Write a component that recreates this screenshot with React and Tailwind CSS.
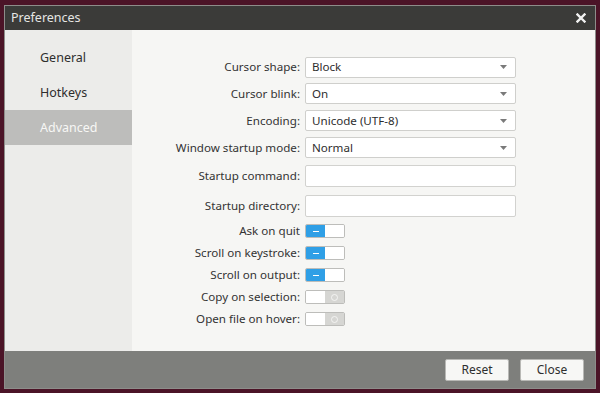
import React from "react";

const font = { fontFamily: '"Noto Sans", "DejaVu Sans", sans-serif' };

function Select({ value }) {
  return (
    <div className="h-[21px] w-[211px] bg-white border border-[#cfcfcc] rounded-[2px] flex items-center justify-between pl-[6px] pr-[8px] text-[11.6px] text-[#2e2e2e]">
      <span>{value}</span>
      <svg width="7" height="4" viewBox="0 0 7 4"><path d="M0 0 L7 0 L3.5 4 Z" fill="#7a7a7a" /></svg>
    </div>
  );
}

function Input() {
  return <div className="h-[22px] w-[211px] bg-white border border-[#d2d2cf] rounded-[2px]" />;
}

function Toggle({ on }) {
  return (
    <div className="h-[14px] w-[40px] flex border border-[#bdbdba] rounded-[2px] overflow-hidden">
      {on ? (
        <>
          <div className="w-[19px] h-full bg-[#2f9fe6] flex items-center justify-center">
            <div className="w-[6px] h-[1px] bg-white" />
          </div>
          <div className="flex-1 bg-white" />
        </>
      ) : (
        <>
          <div className="flex-1 bg-white" />
          <div className="w-[19px] h-full bg-[#d6d6d3] flex items-center justify-center">
            <div className="w-[7px] h-[7px] rounded-full border border-[#f4f4f2]" />
          </div>
        </>
      )}
    </div>
  );
}

function Row({ label, h, children }) {
  return (
    <div className={`flex items-center ${h}`}>
      <div className="w-[163px] text-right text-[11.6px] text-[#333] whitespace-nowrap">{label}</div>
      <div className="ml-[5px]">{children}</div>
    </div>
  );
}

export default function App() {
  return (
    <div className="w-[600px] h-[393px] bg-[#4b1427] pt-[5px] pl-[4px]" style={font}>
      <div className="w-[592px] h-[384px] border border-[#8d8d8a] flex flex-col bg-[#3b3b39]">
        <div className="h-[24px] flex items-center justify-between pl-[6px] pr-[9px] text-[#e6e6e4] text-[12.5px]">
          <span>Preferences</span>
          <svg width="10" height="10" viewBox="0 0 10 10">
            <path d="M1.5 1.5 L8.5 8.5 M8.5 1.5 L1.5 8.5" stroke="#f2f2f2" strokeWidth="2.4" strokeLinecap="square" />
          </svg>
        </div>
        <div className="flex-1 flex">
          <div className="w-[127px] bg-[#ececea] pt-[10px]">
            <div className="h-[35px] flex items-center pl-[35px] pt-[1px] text-[12.5px] text-[#2e2e2e]">General</div>
            <div className="h-[35px] flex items-center pl-[35px] pt-[1px] text-[12.5px] text-[#2e2e2e]">Hotkeys</div>
            <div className="h-[35px] flex items-center pl-[35px] pt-[1px] text-[12.5px] text-[#f7f7f5] bg-[#bdbdbb]">Advanced</div>
          </div>
          <div className="flex-1 bg-[#f6f6f4] pt-[24px] pl-[5px]">
            <Row label="Cursor shape:" h="h-[26px]"><Select value="Block" /></Row>
            <Row label="Cursor blink:" h="h-[27px]"><Select value="On" /></Row>
            <Row label="Encoding:" h="h-[27px]"><Select value="Unicode (UTF-8)" /></Row>
            <Row label="Window startup mode:" h="h-[27px]"><Select value="Normal" /></Row>
            <Row label="Startup command:" h="h-[30px]"><Input /></Row>
            <Row label="Startup directory:" h="h-[29px]"><Input /></Row>
            <Row label="Ask on quit" h="h-[22px]"><Toggle on /></Row>
            <Row label="Scroll on keystroke:" h="h-[22px]"><Toggle on /></Row>
            <Row label="Scroll on output:" h="h-[22px]"><Toggle on /></Row>
            <Row label="Copy on selection:" h="h-[22px]"><Toggle /></Row>
            <Row label="Open file on hover:" h="h-[22px]"><Toggle /></Row>
          </div>
        </div>
        <div className="h-[37px] bg-[#7e7f7c] flex items-center justify-end gap-[11px] pr-[11px]">
          <button className="h-[22px] w-[64px] bg-[#f7f7f5] border border-[#b8b8b5] rounded-[2px] text-[12px] text-[#2e2e2e]">Reset</button>
          <button className="h-[22px] w-[64px] bg-[#f7f7f5] border border-[#b8b8b5] rounded-[2px] text-[12px] text-[#2e2e2e]">Close</button>
        </div>
      </div>
    </div>
  );
}
